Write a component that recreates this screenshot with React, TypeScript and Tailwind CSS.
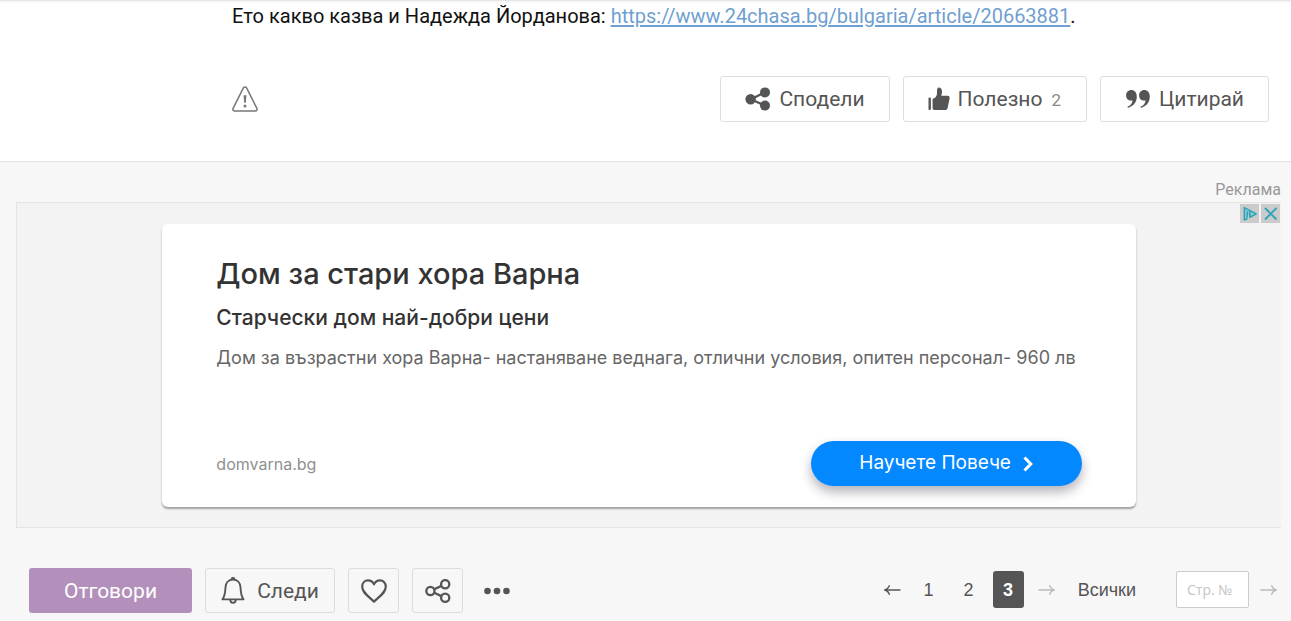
import { useState } from 'react';
import type { ReactNode } from 'react';

type IconProps = { className?: string };

function WarningIcon({ className }: IconProps) {
  return (
    <svg viewBox="0 0 26 26" className={className} fill="none" stroke="currentColor" aria-hidden="true">
      <path
        d="M11.4 1.800a1.900 1.900 0 0 1 3.200 0l10.300 20.600c.6 1.300-.2 2.600-1.600 2.600H2.700c-1.400 0-2.200-1.300-1.600-2.600Z"
        strokeWidth="1.5"
      />
      <path d="M11.5 9.200h3l-.7 7.600h-1.600Z" fill="currentColor" stroke="none" />
      <circle cx="13" cy="20" r="1.500" fill="currentColor" stroke="none" />
    </svg>
  );
}

function ShareSolidIcon({ className }: IconProps) {
  return (
    <svg viewBox="0 0 26 24" className={className} fill="currentColor" aria-hidden="true">
      <path d="M20 5.200 6 12.200 20 18.800" fill="none" stroke="currentColor" strokeWidth="2.200" />
      <circle cx="5.600" cy="12.200" r="5.200" />
      <circle cx="20" cy="5.400" r="5" />
      <circle cx="20" cy="18.600" r="5" />
    </svg>
  );
}

function ThumbIcon({ className }: IconProps) {
  return (
    <svg viewBox="0 0 22 24" className={className} fill="currentColor" aria-hidden="true">
      <rect x="0.500" y="10.500" width="2.400" height="12.500" rx="1" />
      <path d="M4.600 11.800c2.600-.6 4.200-2.400 4.400-5.400.1-1.500-.2-2.900.3-4.400C9.700.8 10.800.2 12 .7c1.600.7 2.100 2.500 2 4.500-.1 1.300-.4 2.400-.8 3.500h6.400c1.600 0 2.300 1 2 2.500l-2 9.700c-.4 1.500-1.100 2.100-2.400 2.100H6.600c-1.300 0-2-.5-2-1.700Z" />
    </svg>
  );
}

function QuoteIcon({ className }: IconProps) {
  return (
    <svg viewBox="0 0 24 18" className={className} fill="currentColor" aria-hidden="true">
      <path d="M5.100 0C8.600 0 10.800 2.600 10.800 6.600c0 5.400-3 9.600-8.800 11.400l-.6-1.200c3.100-1.400 5-3.700 5.100-6.400-3.600.9-6.400-1.500-6.400-5C.1 2.300 2.300 0 5.100 0Z" />
      <path d="M18.100 0c3.500 0 5.700 2.600 5.700 6.600 0 5.400-3 9.600-8.800 11.400l-.6-1.200c3.100-1.400 5-3.700 5.100-6.400-3.600.9-6.400-1.500-6.400-5 0-3.100 2.200-5.400 5-5.400Z" />
    </svg>
  );
}

function BellIcon({ className }: IconProps) {
  return (
    <svg
      viewBox="0 0 24 28"
      className={className}
      fill="none"
      stroke="currentColor"
      strokeWidth="1.900"
      strokeLinejoin="round"
      aria-hidden="true"
    >
      <path d="M12 2.600C7.300 2.600 4.700 5.900 4.500 10.200c-.2 5.300-.5 8.600-3 12.200h21c-2.500-3.600-2.800-6.900-3-12.200C19.300 5.900 16.700 2.600 12 2.600Z" />
      <path d="M10.600 2.400c0-2 2.800-2 2.800 0M9.200 22.600c.1 4.400 5.500 4.400 5.600 0" />
    </svg>
  );
}

function HeartIcon({ className }: IconProps) {
  return (
    <svg
      viewBox="0 0 26 24"
      className={className}
      fill="none"
      stroke="currentColor"
      strokeWidth="2.200"
      strokeLinejoin="round"
      aria-hidden="true"
    >
      <path d="M13 5.300C11.500 2.500 9.200 1.400 7 1.400c-3.400 0-5.800 2.600-5.800 6.200 0 6 5.900 9.400 11.800 15 5.900-5.600 11.800-9 11.800-15 0-3.600-2.400-6.200-5.800-6.200-2.200 0-4.500 1.100-6 3.900Z" />
    </svg>
  );
}

function ShareOutlineIcon({ className }: IconProps) {
  return (
    <svg viewBox="0 0 26 24" className={className} fill="none" stroke="currentColor" strokeWidth="2.300" aria-hidden="true">
      <circle cx="5.400" cy="12" r="4.100" />
      <circle cx="20.200" cy="5.200" r="4.100" />
      <circle cx="20.200" cy="18.800" r="4.100" />
      <path d="m9.200 10.200 7.200-3.300M9.200 13.800l7.200 3.300" />
    </svg>
  );
}

function DotsIcon({ className }: IconProps) {
  return (
    <svg viewBox="0 0 26 8" className={className} fill="currentColor" aria-hidden="true">
      <circle cx="3.500" cy="4" r="3.300" />
      <circle cx="13" cy="4" r="3.300" />
      <circle cx="22.500" cy="4" r="3.300" />
    </svg>
  );
}

function ArrowIcon({ className }: IconProps) {
  return (
    <svg viewBox="0 0 18 12" className={className} fill="none" stroke="currentColor" aria-hidden="true">
      <path d="M.5 6h16M11.500 1.200c.7 2.600 2.400 4.200 5.200 4.800-2.800.6-4.500 2.200-5.200 4.800" strokeWidth="1.300" />
    </svg>
  );
}

type PostButtonProps = {
  icon: ReactNode;
  label: string;
  count?: number;
};

function PostButton({ icon, label, count }: PostButtonProps) {
  return (
    <button
      type="button"
      className="flex h-[46px] items-center gap-2 rounded-[3px] border border-[#dedede] bg-white px-6 text-[21px] text-[#555]"
    >
      {icon}
      <span className="pt-[2px]">{label}</span>
      {count !== undefined && <span className="px-px pt-[3px] text-[17px] text-[#8a8a8a]">{count}</span>}
    </button>
  );
}

function PostFooter() {
  return (
    <section className="border-b border-[#e2e2e2] bg-white">
      <div className="h-1 border-t border-[#e6e6e6] bg-gradient-to-b from-[#f6f6f6] to-white" />
      <div className="pr-[22px] pl-[232px]">
        <p className="text-xl leading-6 text-[#111]">
          Ето какво казва и Надежда Йорданова:{' '}
          <a href="#article" className="text-[#6f9fd0] underline underline-offset-2">
            https://www.24chasa.bg/bulgaria/article/20663881
          </a>
          .
        </p>
        <div className="mt-12 mb-[39px] flex items-center justify-between">
          <button type="button" aria-label="Докладвай" className="text-[#777]">
            <WarningIcon className="size-[26px]" />
          </button>
          <div className="flex gap-[13px]">
            <PostButton icon={<ShareSolidIcon className="h-6 w-[26px]" />} label="Сподели" />
            <PostButton icon={<ThumbIcon className="h-6 w-[22px]" />} label="Полезно" count={2} />
            <PostButton icon={<QuoteIcon className="h-[18px] w-[26px]" />} label="Цитирай" />
          </div>
        </div>
      </div>
    </section>
  );
}

function Advertisement() {
  return (
    <section className="pt-4 pr-[10px] pl-4">
      <p className="text-right text-base leading-6 text-[#999]">Реклама</p>
      <div className="relative border-y border-l border-[#e4e4e4] bg-[#f3f3f3] pt-[21px] pb-5">
        {/* AdChoices */}
        <div className="absolute top-px right-px flex gap-[2px] text-[#2ba3b8]">
          <button type="button" aria-label="AdChoices" className="bg-[#cbcbcb]">
            <svg viewBox="0 0 19 19" className="size-[19px]" fill="none" stroke="currentColor" strokeWidth="1.500">
              <path d="M7.500 14.500 4.300 16V3.600L16.300 9.800 9.800 13.400V6.800" fill="#8fc6d0" strokeLinejoin="round" />
              <path d="M7.300 7.500v6" />
            </svg>
          </button>
          <button type="button" aria-label="Затвори" className="bg-[#cbcbcb]">
            <svg viewBox="0 0 19 19" className="size-[19px]" fill="none" stroke="currentColor" strokeWidth="1.800">
              <path d="m4 4 11.500 11.500M15.500 4 4 15.500" />
            </svg>
          </button>
        </div>

        <div
          lang="bg"
          className="mx-auto w-[77%] rounded-md bg-white px-[54px] pt-8 pb-[21px] font-['Inter',sans-serif] shadow-[0_2px_2px_rgba(0,0,0,0.35)]"
        >
          <h2 className="text-[29px] leading-9 font-medium text-[#333]">Дом за стари хора Варна</h2>
          <h3 className="mt-3 text-[21px] leading-7 font-medium text-[#333]">Старчески дом най-добри цени</h3>
          <p className="mt-3 text-lg leading-7 text-[#666]">
            Дом за възрастни хора Варна- настаняване веднага, отлични условия, опитен персонал- 960 лв
          </p>
          <div className="mt-[69px] flex items-center justify-between">
            <a href="#domvarna" className="text-base text-[#909090]">
              domvarna.bg
            </a>
            <a
              href="#more"
              className="flex h-[45px] w-[271px] items-center justify-center gap-3 rounded-full bg-[#0488ff] text-[19px] text-white shadow-[0_6px_12px_rgba(0,0,30,0.3)]"
            >
              Научете Повече
              <svg viewBox="0 0 10 16" className="h-4 w-[10px]" fill="none" stroke="currentColor" strokeWidth="3">
                <path d="m1.500 1.500 6.300 6.500-6.300 6.500" />
              </svg>
            </a>
          </div>
        </div>
      </div>
    </section>
  );
}

const toolButton =
  'flex h-[45px] items-center justify-center rounded-[3px] border border-[#dcdcdc] text-[#555]';

function TopicToolbar() {
  const [page, setPage] = useState('');

  return (
    <footer className="flex items-center justify-between pt-10 pr-[13px] pb-2 pl-[29px]">
      <div className="flex items-center gap-[13px]">
        <button type="button" className="h-[45px] w-[163px] rounded-[3px] bg-[#b390bb] pt-[2px] text-[21px] text-white">
          Отговори
        </button>
        <button type="button" className={`${toolButton} w-[130px] gap-3 text-[21px]`}>
          <BellIcon className="h-7 w-6" />
          <span className="pt-[2px]">Следи</span>
        </button>
        <button type="button" aria-label="Харесай" className={`${toolButton} w-[51px]`}>
          <HeartIcon className="h-6 w-[26px]" />
        </button>
        <button type="button" aria-label="Сподели темата" className={`${toolButton} w-[51px]`}>
          <ShareOutlineIcon className="h-6 w-[26px]" />
        </button>
        <button type="button" aria-label="Още" className="ml-2 text-[#555]">
          <DotsIcon className="h-2 w-[26px]" />
        </button>
      </div>

      <nav className="flex items-center pb-[2px] font-['Liberation_Sans',sans-serif] text-lg text-[#555]">
        <a href="#prev" aria-label="Предишна">
          <ArrowIcon className="h-3 w-[18px] rotate-180" />
        </a>
        <a href="#page-1" className="ml-2 w-10 text-center">
          1
        </a>
        <a href="#page-2" className="w-10 text-center">
          2
        </a>
        <a
          href="#page-3"
          aria-current="page"
          className="ml-1 flex h-[37px] w-[31px] items-center justify-center rounded-[3px] bg-[#555] font-bold text-white"
        >
          3
        </a>
        <a href="#next" aria-label="Следваща" className="ml-[14px] text-[#bbb]">
          <ArrowIcon className="h-3 w-[18px]" />
        </a>
        <a href="#all" className="ml-[22px]">
          Всички
        </a>
        <input
          type="text"
          aria-label="Номер на страница"
          placeholder="Стр. №"
          value={page}
          onChange={(e) => setPage(e.target.value)}
          className="ml-10 h-[37px] w-[73px] rounded-[2px] border border-[#ccc] bg-white px-[10px] font-['Open_Sans',sans-serif] text-sm text-[#555] placeholder:text-[#c4c4c4]"
        />
        <button type="button" aria-label="Отиди на страница" className="ml-[11px] text-[#bbb]">
          <ArrowIcon className="h-3 w-[18px]" />
        </button>
      </nav>
    </footer>
  );
}

export default function App() {
  return (
    <main className="min-h-screen bg-[#f7f7f7] font-['Roboto',sans-serif]">
      <PostFooter />
      <Advertisement />
      <TopicToolbar />
    </main>
  );
}
